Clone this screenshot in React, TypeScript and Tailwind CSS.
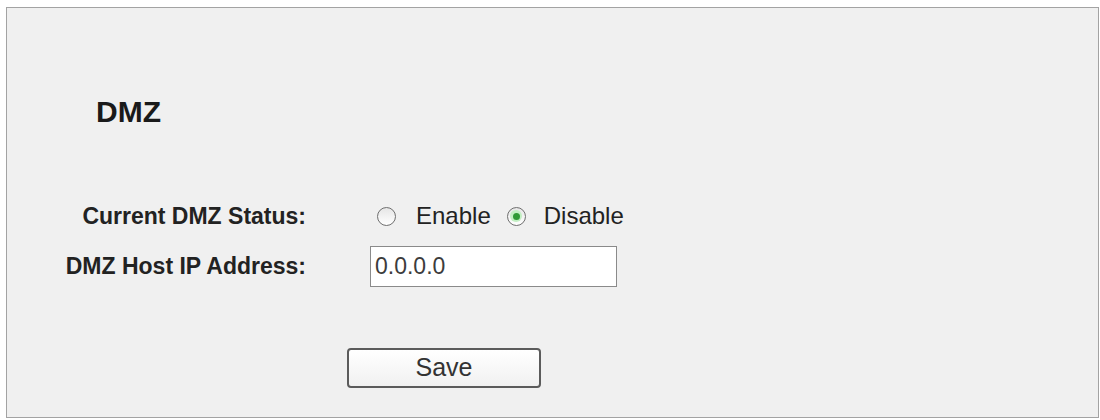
import React from 'react';

const font = { fontFamily: '"Liberation Sans", Arial, sans-serif' };

const Radio: React.FC<{ checked?: boolean }> = ({ checked }) => (
  <span className="flex h-[19px] w-[19px] items-center justify-center rounded-full border-[1.5px] border-[#6f6f6f] bg-gradient-to-b from-[#e6e6e6] to-[#ffffff]">
    {checked && (
      <span className="flex h-[12px] w-[12px] items-center justify-center rounded-full bg-[#c2efc2]">
        <span className="h-[7px] w-[7px] rounded-full bg-[#2f9a35]" />
      </span>
    )}
  </span>
);

export default function App() {
  return (
    <div className="h-[420px] w-[1100px] bg-white pl-[6px] pt-[7px]" style={font}>
      <div className="h-[411px] w-[1093px] border border-[#a3a3a3] bg-[#f0f0f0]">
        <h1 className="ml-[89px] mt-[90px] text-[30px] font-bold leading-[28px] text-[#1a1a1a]">DMZ</h1>

        <div className="mt-[70px] grid grid-cols-[299px_1fr] gap-y-[10px] text-[23px] text-[#222]">
          <div className="flex h-[40px] items-center justify-end font-bold">Current DMZ Status:</div>
          <div className="ml-[71px] flex h-[40px] items-center text-[24px]">
            <Radio />
            <span className="ml-[20px]">Enable</span>
            <span className="ml-[16px]"><Radio checked /></span>
            <span className="ml-[18px]">Disable</span>
          </div>

          <div className="flex h-[41px] items-center justify-end font-bold">DMZ Host IP Address:</div>
          <div className="ml-[64px] flex">
            <div className="flex h-[41px] w-[247px] items-center border border-[#8a8a8a] bg-white pl-[4px] text-[#3c3c3c]">
              0.0.0.0
            </div>
          </div>
        </div>

        <button className="ml-[340px] mt-[61px] flex h-[40px] w-[194px] items-center justify-center rounded-[4px] border-2 border-[#5b5b5b] bg-gradient-to-b from-[#ffffff] to-[#f1f1f1] text-[25px] text-[#333]">
          Save
        </button>
      </div>
    </div>
  );
}
